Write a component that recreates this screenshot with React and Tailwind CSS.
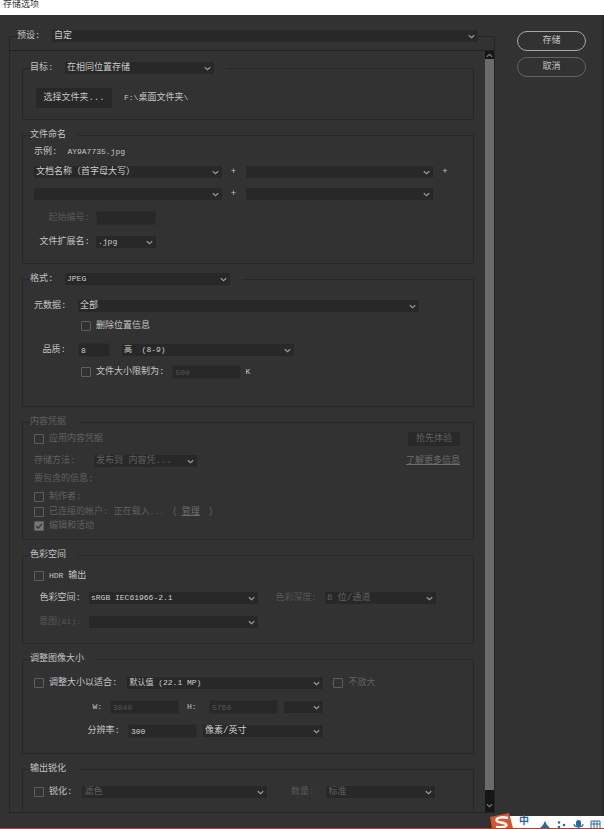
import React from "react";

function Chevron({ up = false, className = "" }) {
  return (
    <svg viewBox="0 0 7 5" className={`h-[5px] w-[7px] ${className}`} fill="none" stroke="currentColor" strokeWidth="1.2" aria-hidden="true">
      <path d={up ? "M0.8 3.8 L3.500 1.400 L6.200 3.800" : "M0.8 1.200 L3.500 3.600 L6.200 1.200"} />
    </svg>
  );
}

function Select({ id, label, value = "", disabled, small, className = "" }) {
  return (
    <span className={`relative flex h-3 items-center bg-[#282828] ${className}`}>
      <select
        id={id}
        aria-label={label}
        disabled={disabled}
        defaultValue={value}
        className={`h-3 w-full appearance-none truncate bg-transparent py-0 pr-4 pl-0.5 leading-3 opacity-100 outline-none ${small ? "text-[8px]" : "text-[9px]"} ${disabled ? "text-[#606060]" : "text-[#cdcdcd]"}`}
      >
        <option value={value}>{value}</option>
      </select>
      <Chevron className="pointer-events-none absolute right-[3px] text-[#9a9a9a]" />
    </span>
  );
}

function Field({ id, label, value = "", disabled, className = "" }) {
  return (
    <input
      id={id}
      aria-label={label}
      type="text"
      defaultValue={value}
      disabled={disabled}
      className={`h-[14px] border border-[#2d2d2d] bg-[#282828] px-0.5 text-[8px] leading-3 outline-none ${disabled ? "text-[#565656]" : "text-[#cdcdcd]"} ${className}`}
    />
  );
}

function Check({ id, children, disabled, checked }) {
  return (
    <span className={`flex items-center gap-[5px] ${disabled ? "text-[#606060]" : ""}`}>
      <span className="relative flex">
        <input
          id={id}
          type="checkbox"
          disabled={disabled}
          defaultChecked={checked}
          className="size-[10px] appearance-none rounded-[1px] border border-[#5e5e5e] checked:bg-[#747474]"
        />
        {checked && (
          <svg viewBox="0 0 10 10" className="pointer-events-none absolute inset-0 size-[10px]" fill="none" stroke="#323232" strokeWidth="1.2" aria-hidden="true">
            <path d="M2.2 5.2 L4.2 7.2 L7.8 3" />
          </svg>
        )}
      </span>
      <label htmlFor={id}>{children}</label>
    </span>
  );
}

function Group({ legend, disabled, className = "", children }) {
  return (
    <fieldset className={`min-w-0 border border-[#272727] px-[11px] ${disabled ? "text-[#606060]" : ""} ${className}`}>
      <legend className="-ml-1 flex h-[14px] items-center pr-3">{legend}</legend>
      {children}
    </fieldset>
  );
}

function Latin({ children }) {
  return <span className="text-[8px]">{children}</span>;
}

function NameRow({ n, first, height, last }) {
  return (
    <div className={`flex items-center pr-[5px] ${height}`}>
      <Select label={`名称 ${n}`} value={first} className="flex-1" />
      <span className="w-6 text-center">+</span>
      <Select label={`名称 ${n + 1}`} className="flex-1" />
      <span className="w-6 text-center">{last ? "" : "+"}</span>
    </div>
  );
}

export default function App() {
  return (
    <div className="flex min-h-screen flex-col overflow-hidden bg-[#323232] font-['Liberation_Mono','Noto_Sans_CJK_SC',monospace] text-[9px] leading-3 whitespace-nowrap text-[#c4c4c4]">
      <header className="h-[15px] bg-white pl-[3px] text-[#333333]">
        <h1 className="-mt-px">存储选项</h1>
      </header>

      <main className="flex flex-1 items-start border-r-2 border-[#292929] pt-[14px] pr-4 pl-[9px]">
        <fieldset className="min-w-0 flex-1 border border-[#242424]">
          <legend className="ml-[7px] flex h-[14px] w-[calc(100%-23px)] items-center">
            <label htmlFor="preset" className="w-[35px]">预设:</label>
            <Select id="preset" value="自定" className="flex-1" />
          </legend>

          <div className="mt-[7px] flex border-t border-[#222222]">
            <div className="flex min-w-0 flex-1 flex-col gap-2 pt-[10px] pr-[11px] pl-3">
              <Group
                className="pb-[11px]"
                legend={
                  <>
                    <label htmlFor="target" className="w-[35px]">目标:</label>
                    <Select id="target" value="在相同位置存储" className="w-[149px]" />
                  </>
                }
              >
                <div className="flex items-center gap-3 pt-[13px]">
                  <button type="button" className="ml-0.5 h-5 w-[76px] bg-[#282828]">选择文件夹...</button>
                  <span><Latin>F:\</Latin>桌面文件夹<Latin>\</Latin></span>
                </div>
              </Group>

              <Group legend="文件命名" className="pb-[9px]">
                <div className="flex h-5 items-center gap-[10px]">
                  <span>示例:</span>
                  <Latin>AY9A7735.jpg</Latin>
                </div>
                <NameRow n={1} first="文档名称（首字母大写）" height="h-5" />
                <NameRow n={3} height="h-6" last />
                <div className="flex h-6 items-center gap-1.5">
                  <label htmlFor="start" className="w-14 text-right text-[#565656]">起始编号:</label>
                  <Field id="start" disabled className="w-[60px]" />
                </div>
                <div className="flex h-6 items-center gap-1.5">
                  <label htmlFor="ext" className="w-14 text-right">文件扩展名:</label>
                  <Select id="ext" value=".jpg" small className="w-[60px]" />
                </div>
              </Group>

              <Group
                className="pb-6"
                legend={
                  <>
                    <label htmlFor="format" className="w-[35px]">格式:</label>
                    <Select id="format" value="JPEG" small className="w-[165px]" />
                  </>
                }
              >
                <div className="flex h-8 items-center gap-3 pt-2">
                  <label htmlFor="meta" className="w-8 text-right">元数据:</label>
                  <Select id="meta" value="全部" className="w-[341px]" />
                </div>
                <div className="flex h-4 items-center pl-[47px]">
                  <Check id="loc">删除位置信息</Check>
                </div>
                <div className="mt-1 flex h-6 items-center gap-3">
                  <label htmlFor="quality" className="w-8 text-right">品质:</label>
                  <Field id="quality" value="8" className="w-8" />
                  <Select label="品质等级" value={"高\u00a0\u00a0(8-9)"} small className="w-[172px]" />
                </div>
                <div className="flex h-5 items-center pl-[47px]">
                  <Check id="limit">文件大小限制为:</Check>
                  <Field label="文件大小" value="500" disabled className="mr-1 ml-2 w-[69px]" />
                  <Latin>K</Latin>
                </div>
              </Group>

              <Group legend="内容凭据" disabled className="pb-1.5">
                <div className="flex h-5 items-center justify-between pr-0.5">
                  <Check id="cred" disabled>应用内容凭据</Check>
                  <button type="button" disabled className="h-[14px] w-[52px] bg-[#292929]">抢先体验</button>
                </div>
                <div className="flex h-6 items-center pr-0.5">
                  <label htmlFor="store" className="w-[60px]">存储方法:</label>
                  <Select id="store" value="发布到 内容凭..." disabled className="w-[103px]" />
                  <a href="#more" className="ml-auto text-[#6c6c6c] underline">了解更多信息</a>
                </div>
                <p className="flex h-3 items-center">要包含的信息:</p>
                <div className="mt-1 flex h-4 items-center">
                  <Check id="maker" disabled>制作者:</Check>
                </div>
                <div className="flex h-[14px] items-center">
                  <Check id="accounts" disabled>已连接的帐户: 正在载入<Latin>...</Latin></Check>
                  <span className="flex gap-1 pl-2">
                    <span>(</span>
                    <a href="#manage" className="text-[#6c6c6c] underline">管理</a>
                    <span className="pl-1">)</span>
                  </span>
                </div>
                <div className="flex h-[14px] items-center">
                  <Check id="edits" disabled checked>编辑和活动</Check>
                </div>
              </Group>

              <Group legend="色彩空间" className="pb-[9px]">
                <div className="mt-1 flex h-5 items-center">
                  <Check id="hdr"><Latin>HDR </Latin>输出</Check>
                </div>
                <div className="flex h-6 items-center gap-2">
                  <label htmlFor="space" className="w-[47px] text-right">色彩空间:</label>
                  <Select id="space" value="sRGB IEC61966-2.1" small className="w-[169px]" />
                  <label htmlFor="depth" className="w-[51px] text-right text-[#565656]">色彩深度:</label>
                  <Select id="depth" value="8 位/通道" disabled className="w-[111px]" />
                </div>
                <div className="flex h-6 items-center gap-2">
                  <label htmlFor="intent" className="w-[47px] text-right text-[#565656]">意图<Latin>(&amp;I):</Latin></label>
                  <Select id="intent" disabled className="w-[169px]" />
                </div>
              </Group>

              <Group legend="调整图像大小" className="pb-[10px]">
                <div className="mt-[5px] flex h-6 items-center">
                  <Check id="resize">调整大小以适合:</Check>
                  <Select label="适合" value="默认值 (22.1 MP)" small className="mr-[10px] ml-[10px] w-[196px]" />
                  <Check id="noenlarge" disabled>不放大</Check>
                </div>
                <div className="flex h-6 items-center">
                  <label htmlFor="w" className="w-[68px] text-right text-[8px]">W:</label>
                  <Field id="w" value="3840" disabled className="ml-2 w-[69px]" />
                  <label htmlFor="h" className="w-[30px] pl-2 text-[8px]">H:</label>
                  <Field id="h" value="5760" disabled className="w-[69px]" />
                  <Select label="单位" disabled className="ml-1.5 w-[39px]" />
                </div>
                <div className="flex h-6 items-center">
                  <label htmlFor="res" className="w-[86px] text-right">分辨率:</label>
                  <Field id="res" value="300" className="ml-2 w-[69px]" />
                  <Select label="分辨率单位" value="像素/英寸" className="ml-1.5 w-[120px]" />
                </div>
              </Group>

              <Group legend="输出锐化" className="border-b-0 pb-2">
                <div className="mt-1 flex h-6 items-center">
                  <Check id="sharpen">锐化:</Check>
                  <Select label="锐化" value="滤色" disabled className="ml-[10px] w-[185px]" />
                  <label htmlFor="amount" className="w-[47px] text-right text-[#565656]">数量:</label>
                  <Select id="amount" value="标准" disabled className="ml-3 w-[109px]" />
                </div>
              </Group>
            </div>

            <div className="flex w-[9px] flex-col bg-[#161616] text-[#777777]">
              <button type="button" aria-label="向上滚动" className="flex h-2 items-center justify-center">
                <Chevron up />
              </button>
              <div className="flex-1 bg-[#6b6b6b]" />
              <button type="button" aria-label="向下滚动" className="flex h-[22px] items-end justify-center pb-1">
                <Chevron />
              </button>
            </div>
          </div>
        </fieldset>

        <div className="ml-[22px] flex w-[69px] flex-col gap-1.5 pt-0.5">
          <button type="button" className="h-5 rounded-full border border-[#a8a8a8]">存储</button>
          <button type="button" className="h-5 rounded-full border border-[#626262]">取消</button>
        </div>
      </main>

      <footer className="-mt-4 flex h-4 items-end justify-end border-b border-[#a94432]">
        <svg viewBox="0 0 23 15" className="z-10 -mr-2 h-[15px] w-[23px]" aria-hidden="true">
          <path d="M0 4 L19 0 L23 15 L2 15 Z" fill="#d9542b" />
          <path d="M18 5 C12 3.500 6 4.500 6.500 7.500 C7 10 16 9 16.500 12 C17 14 11 14.500 6 14" fill="none" stroke="#ffffff" strokeWidth="2.400" />
        </svg>
        <div className="flex h-3 w-[99px] items-center gap-2 bg-white pl-[14px] text-[#2369a5]">
          <span className="text-[10px] leading-3 font-bold">中</span>
          <svg viewBox="0 0 64 12" className="h-3 w-16" fill="currentColor" aria-hidden="true">
            <path d="M8 5 L10 9 L13 12 L3 12 L6 9 Z" />
            <circle cx="22" cy="6.500" r="1.300" />
            <circle cx="27" cy="9" r="1.300" />
            <circle cx="22" cy="11" r="1.300" />
            <rect x="39" y="4" width="5" height="7" rx="2.500" />
            <path d="M37 8 C37 12 46 12 46 8 M41.500 11 V12" fill="none" stroke="currentColor" strokeWidth="1.200" />
            <path d="M54 5 H63 V13 H54 Z M54 8 H63 M57 5 V12 M60 5 V12" fill="none" stroke="currentColor" strokeWidth="1" />
          </svg>
        </div>
      </footer>
    </div>
  );
}
